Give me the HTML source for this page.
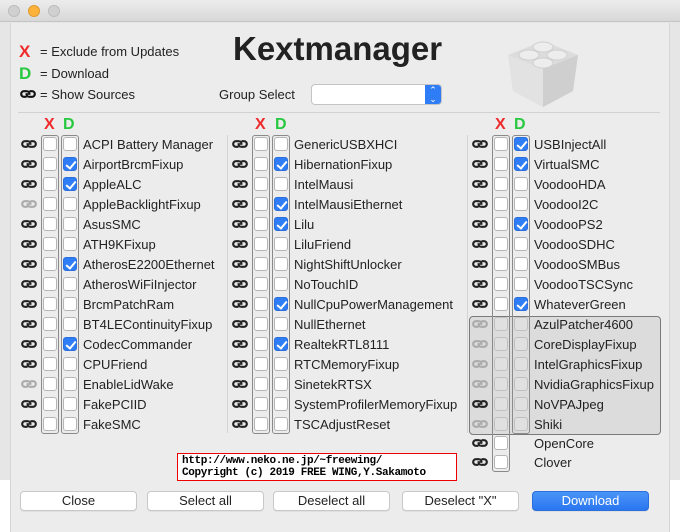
<!DOCTYPE html>
<html><head><meta charset="utf-8"><style>
*{box-sizing:border-box;margin:0;padding:0}
body{width:680px;height:532px;position:relative;background:#fff;font-family:"Liberation Sans",sans-serif;font-size:13px;color:#222;overflow:hidden}
.back{position:absolute;left:0;top:0;width:680px;height:480px;background:#e6e6e6}
.title{position:absolute;left:0;top:0;width:680px;height:22px;background:linear-gradient(#ececec,#d8d8d8);border-bottom:1px solid #c4c4c4}
.dot{position:absolute;top:5px;width:12px;height:12px;border-radius:50%;background:#d0d0d0;border:1px solid #bdbdbd}
.win{position:absolute;left:10px;top:23px;width:660px;height:509px;background:#ececec;border-left:1px solid #d6d6d6;border-right:1px solid #d6d6d6}
.a{position:absolute;white-space:nowrap}
.r{position:absolute;height:20px;display:flex;align-items:center;white-space:nowrap}
.r svg{width:18px;height:10px;margin-right:5px}
.cb{width:14px;height:14px;background:#fff;border:1px solid #b5b5b5;border-radius:3px;margin-right:6px;flex:none;position:relative}
.cb.c{background:#2f7df6;border-color:#2a6fdc}
.cb.c::after{content:"";position:absolute;left:4px;top:1px;width:4px;height:8px;border:solid #fff;border-width:0 2px 2px 0;transform:rotate(40deg)}
.grp{position:absolute;border:1px solid #8a8a8a;border-radius:3px;width:18px}
.g .cb{background:#e0e0e0;border-color:#c0c0c0}
.btn{position:absolute;top:491px;height:20px;width:117px;background:#fff;border:1px solid #c8c8c8;border-radius:4px;text-align:center;line-height:18px;font-size:13px;color:#222;box-shadow:0 1px 0 rgba(0,0,0,.05)}
.xd{position:absolute;font-weight:bold;font-size:16px}
</style></head><body>
<div class="back"></div>
<div class="title"><div class="dot" style="left:8px"></div><div class="dot" style="left:28px;background:#fdb33b;border-color:#e09a2e"></div><div class="dot" style="left:48px"></div></div>
<div class="win"></div>
<svg width="0" height="0" style="position:absolute"><defs><symbol id="lk" viewBox="0 0 18 10"><path d="M8 2.2 H5 A2.8 2.8 0 0 0 5 7.8 H7.5" fill="none" stroke="currentColor" stroke-width="2.2"/><path d="M10 7.8 H13 A2.8 2.8 0 0 0 13 2.2 H10.5" fill="none" stroke="currentColor" stroke-width="2.2"/><path d="M6.5 5 H11.5" stroke="currentColor" stroke-width="1.6"/><path d="M8 2.2 A2.8 2.8 0 0 1 10.5 4.5 M10 7.8 A2.8 2.8 0 0 1 7.5 5.5" fill="none" stroke="currentColor" stroke-width="2"/></symbol></defs></svg>

<div class="a" style="left:19px;top:42px;color:#f02a2a;font-size:17px;font-weight:bold">X</div>
<div class="a" style="left:40px;top:44px">= Exclude from Updates</div>
<div class="a" style="left:19px;top:64px;color:#28c840;font-size:17px;font-weight:bold">D</div>
<div class="a" style="left:40px;top:66px">= Download</div>
<svg class="a" style="left:19px;top:89px;width:18px;height:10px;color:#111"><use href="#lk"/></svg>
<div class="a" style="left:40px;top:87px">= Show Sources</div>
<div class="a" style="left:233px;top:30px;font-size:33px;font-weight:bold;color:#222">Kextmanager</div>
<div class="a" style="left:219px;top:87px">Group Select</div>
<div class="a" style="left:311px;top:84px;width:131px;height:21px;background:#fff;border:1px solid #c4c4c4;border-radius:4px;overflow:hidden"><div style="position:absolute;right:0;top:0;width:16px;height:100%;background:#2f7df6;color:#fff;font-size:9px;line-height:9px;text-align:center;padding-top:1px">⌃<br>⌄</div></div>
<svg class="a" style="left:503px;top:33px" width="80" height="76" viewBox="0 0 80 76"><path d="M5 22 L40 8 L75 22 L70 58 L40 74 L10 58Z" fill="#dcdcdc"/><path d="M5 22 L40 36 L40 74 L10 58Z" fill="#e2e2e2"/><path d="M40 36 L75 22 L70 58 L40 74Z" fill="#cfcfcf"/><ellipse cx="40" cy="14" rx="10" ry="5" fill="#ededed" stroke="#cfcfcf"/><ellipse cx="26" cy="22" rx="10" ry="5" fill="#ededed" stroke="#cfcfcf"/><ellipse cx="54" cy="22" rx="10" ry="5" fill="#ededed" stroke="#cfcfcf"/><ellipse cx="40" cy="30" rx="10" ry="5" fill="#ededed" stroke="#cfcfcf"/></svg>
<div class="a" style="left:18px;top:112px;width:642px;height:1px;background:#d2d2d2"></div>
<div class="a" style="left:227px;top:135px;width:1px;height:298px;background:#d4d4d4"></div>
<div class="a" style="left:467px;top:135px;width:1px;height:298px;background:#d4d4d4"></div>

<div class="xd" style="left:44px;top:116px;color:#f02a2a">X</div><div class="xd" style="left:63px;top:116px;color:#28c840">D</div>
<div class="xd" style="left:255px;top:116px;color:#f02a2a">X</div><div class="xd" style="left:275px;top:116px;color:#28c840">D</div>
<div class="xd" style="left:495px;top:116px;color:#f02a2a">X</div><div class="xd" style="left:514px;top:116px;color:#28c840">D</div>

<div class="a" style="left:469px;top:316px;width:192px;height:119px;background:#dcdcdc;border:1.5px solid #7a7a7a;border-radius:4px"></div>

<div class="grp" style="left:41px;top:135px;height:299px"></div><div class="grp" style="left:61px;top:135px;height:299px"></div>
<div class="grp" style="left:252px;top:135px;height:299px"></div><div class="grp" style="left:272px;top:135px;height:299px"></div>
<div class="grp" style="left:492px;top:135px;height:337px"></div><div class="grp" style="left:512px;top:135px;height:299px"></div>

<div class="r" style="left:20px;top:134px"><svg><use href="#lk"/></svg><b class="cb"></b><b class="cb"></b>ACPI Battery Manager</div>
<div class="r" style="left:20px;top:154px"><svg><use href="#lk"/></svg><b class="cb"></b><b class="cb c"></b>AirportBrcmFixup</div>
<div class="r" style="left:20px;top:174px"><svg><use href="#lk"/></svg><b class="cb"></b><b class="cb c"></b>AppleALC</div>
<div class="r" style="left:20px;top:194px"><svg style="color:#aaa"><use href="#lk"/></svg><b class="cb"></b><b class="cb"></b>AppleBacklightFixup</div>
<div class="r" style="left:20px;top:214px"><svg><use href="#lk"/></svg><b class="cb"></b><b class="cb"></b>AsusSMC</div>
<div class="r" style="left:20px;top:234px"><svg><use href="#lk"/></svg><b class="cb"></b><b class="cb"></b>ATH9KFixup</div>
<div class="r" style="left:20px;top:254px"><svg><use href="#lk"/></svg><b class="cb"></b><b class="cb c"></b>AtherosE2200Ethernet</div>
<div class="r" style="left:20px;top:274px"><svg><use href="#lk"/></svg><b class="cb"></b><b class="cb"></b>AtherosWiFiInjector</div>
<div class="r" style="left:20px;top:294px"><svg><use href="#lk"/></svg><b class="cb"></b><b class="cb"></b>BrcmPatchRam</div>
<div class="r" style="left:20px;top:314px"><svg><use href="#lk"/></svg><b class="cb"></b><b class="cb"></b>BT4LEContinuityFixup</div>
<div class="r" style="left:20px;top:334px"><svg><use href="#lk"/></svg><b class="cb"></b><b class="cb c"></b>CodecCommander</div>
<div class="r" style="left:20px;top:354px"><svg><use href="#lk"/></svg><b class="cb"></b><b class="cb"></b>CPUFriend</div>
<div class="r" style="left:20px;top:374px"><svg style="color:#aaa"><use href="#lk"/></svg><b class="cb"></b><b class="cb"></b>EnableLidWake</div>
<div class="r" style="left:20px;top:394px"><svg><use href="#lk"/></svg><b class="cb"></b><b class="cb"></b>FakePCIID</div>
<div class="r" style="left:20px;top:414px"><svg><use href="#lk"/></svg><b class="cb"></b><b class="cb"></b>FakeSMC</div>

<div class="r" style="left:231px;top:134px"><svg><use href="#lk"/></svg><b class="cb"></b><b class="cb"></b>GenericUSBXHCI</div>
<div class="r" style="left:231px;top:154px"><svg><use href="#lk"/></svg><b class="cb"></b><b class="cb c"></b>HibernationFixup</div>
<div class="r" style="left:231px;top:174px"><svg><use href="#lk"/></svg><b class="cb"></b><b class="cb"></b>IntelMausi</div>
<div class="r" style="left:231px;top:194px"><svg><use href="#lk"/></svg><b class="cb"></b><b class="cb c"></b>IntelMausiEthernet</div>
<div class="r" style="left:231px;top:214px"><svg><use href="#lk"/></svg><b class="cb"></b><b class="cb c"></b>Lilu</div>
<div class="r" style="left:231px;top:234px"><svg><use href="#lk"/></svg><b class="cb"></b><b class="cb"></b>LiluFriend</div>
<div class="r" style="left:231px;top:254px"><svg><use href="#lk"/></svg><b class="cb"></b><b class="cb"></b>NightShiftUnlocker</div>
<div class="r" style="left:231px;top:274px"><svg><use href="#lk"/></svg><b class="cb"></b><b class="cb"></b>NoTouchID</div>
<div class="r" style="left:231px;top:294px"><svg><use href="#lk"/></svg><b class="cb"></b><b class="cb c"></b>NullCpuPowerManagement</div>
<div class="r" style="left:231px;top:314px"><svg><use href="#lk"/></svg><b class="cb"></b><b class="cb"></b>NullEthernet</div>
<div class="r" style="left:231px;top:334px"><svg><use href="#lk"/></svg><b class="cb"></b><b class="cb c"></b>RealtekRTL8111</div>
<div class="r" style="left:231px;top:354px"><svg><use href="#lk"/></svg><b class="cb"></b><b class="cb"></b>RTCMemoryFixup</div>
<div class="r" style="left:231px;top:374px"><svg><use href="#lk"/></svg><b class="cb"></b><b class="cb"></b>SinetekRTSX</div>
<div class="r" style="left:231px;top:394px"><svg><use href="#lk"/></svg><b class="cb"></b><b class="cb"></b>SystemProfilerMemoryFixup</div>
<div class="r" style="left:231px;top:414px"><svg><use href="#lk"/></svg><b class="cb"></b><b class="cb"></b>TSCAdjustReset</div>

<div class="r" style="left:471px;top:134px"><svg><use href="#lk"/></svg><b class="cb"></b><b class="cb c"></b>USBInjectAll</div>
<div class="r" style="left:471px;top:154px"><svg><use href="#lk"/></svg><b class="cb"></b><b class="cb c"></b>VirtualSMC</div>
<div class="r" style="left:471px;top:174px"><svg><use href="#lk"/></svg><b class="cb"></b><b class="cb"></b>VoodooHDA</div>
<div class="r" style="left:471px;top:194px"><svg><use href="#lk"/></svg><b class="cb"></b><b class="cb"></b>VoodooI2C</div>
<div class="r" style="left:471px;top:214px"><svg><use href="#lk"/></svg><b class="cb"></b><b class="cb c"></b>VoodooPS2</div>
<div class="r" style="left:471px;top:234px"><svg><use href="#lk"/></svg><b class="cb"></b><b class="cb"></b>VoodooSDHC</div>
<div class="r" style="left:471px;top:254px"><svg><use href="#lk"/></svg><b class="cb"></b><b class="cb"></b>VoodooSMBus</div>
<div class="r" style="left:471px;top:274px"><svg><use href="#lk"/></svg><b class="cb"></b><b class="cb"></b>VoodooTSCSync</div>
<div class="r" style="left:471px;top:294px"><svg><use href="#lk"/></svg><b class="cb"></b><b class="cb c"></b>WhateverGreen</div>
<div class="r g" style="left:471px;top:314px"><svg style="color:#aaa"><use href="#lk"/></svg><b class="cb"></b><b class="cb"></b>AzulPatcher4600</div>
<div class="r g" style="left:471px;top:334px"><svg style="color:#aaa"><use href="#lk"/></svg><b class="cb"></b><b class="cb"></b>CoreDisplayFixup</div>
<div class="r g" style="left:471px;top:354px"><svg style="color:#aaa"><use href="#lk"/></svg><b class="cb"></b><b class="cb"></b>IntelGraphicsFixup</div>
<div class="r g" style="left:471px;top:374px"><svg style="color:#aaa"><use href="#lk"/></svg><b class="cb"></b><b class="cb"></b>NvidiaGraphicsFixup</div>
<div class="r g" style="left:471px;top:394px"><svg><use href="#lk"/></svg><b class="cb"></b><b class="cb"></b>NoVPAJpeg</div>
<div class="r g" style="left:471px;top:414px"><svg style="color:#aaa"><use href="#lk"/></svg><b class="cb"></b><b class="cb"></b>Shiki</div>
<div class="r" style="left:471px;top:433px"><svg><use href="#lk"/></svg><b class="cb"></b><span style="margin-left:20px">OpenCore</span></div>
<div class="r" style="left:471px;top:452px"><svg><use href="#lk"/></svg><b class="cb"></b><span style="margin-left:20px">Clover</span></div>

<div class="a" style="left:177px;top:453px;width:280px;height:28px;background:#fff;border:1px solid #e00;font-family:'Liberation Mono',monospace;font-weight:bold;font-size:11px;line-height:12px;padding:1px 0 0 4px;color:#000;letter-spacing:-0.35px">http://www.neko.ne.jp/~freewing/<br>Copyright (c) 2019 FREE WING,Y.Sakamoto</div>

<div class="btn" style="left:20px">Close</div>
<div class="btn" style="left:147px">Select all</div>
<div class="btn" style="left:273px">Deselect all</div>
<div class="btn" style="left:402px">Deselect "X"</div>
<div class="btn" style="left:532px;background:linear-gradient(#4a95f8,#2a76ef);border-color:#2a6fdc;color:#fff">Download</div>
</body></html>
